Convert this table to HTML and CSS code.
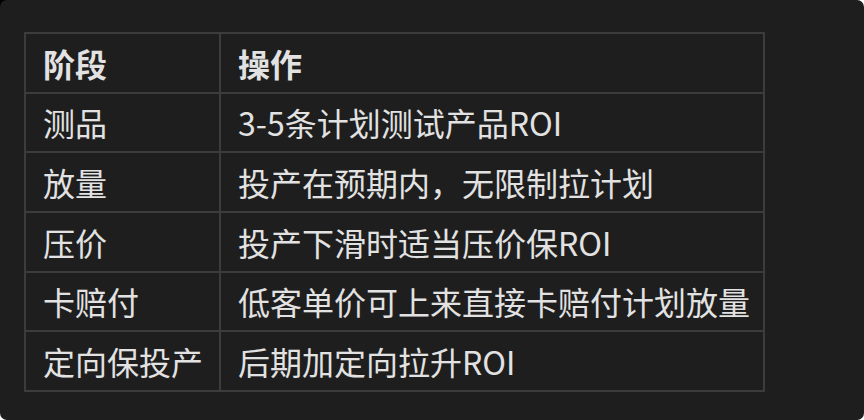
FILE: index.html
```html
<!DOCTYPE html>
<html lang="zh">
<head>
<meta charset="utf-8">
<link rel="stylesheet" href="styles.css">
</head>
<body>
<div class="card">
  <table class="grid">
    <thead>
      <tr><th class="c1">阶段</th><th>操作</th></tr>
    </thead>
    <tbody>
      <tr><td>测品</td><td>3-5条计划测试产品ROI</td></tr>
      <tr><td>放量</td><td>投产在预期内，无限制拉计划</td></tr>
      <tr><td>压价</td><td>投产下滑时适当压价保ROI</td></tr>
      <tr><td>卡赔付</td><td>低客单价可上来直接卡赔付计划放量</td></tr>
      <tr><td>定向保投产</td><td>后期加定向拉升ROI</td></tr>
    </tbody>
  </table>
</div>
</body>
</html>
```
FILE: styles.css
```css
html {
  background: linear-gradient(135deg, #000 0 12px, #fff 12px);
}
body {
  margin: 0;
  width: 864px;
  height: 420px;
}
.card {
  box-sizing: border-box;
  width: 864px;
  height: 420px;
  background: #1e1e1e;
  border-radius: 7px;
  padding: 32px 0 0 24px;
}
.grid {
  border-collapse: collapse;
  width: 741px;
  font-family: "Noto Sans CJK SC", "PingFang SC", sans-serif;
  font-size: 32px;
  color: #e2e2e2;
}
.grid th,
.grid td {
  border: 2px solid #3c3c3c;
  height: 57.7px;
  padding: 0 16px 0 17px;
  text-align: left;
  vertical-align: middle;
  line-height: 1.2;
  white-space: nowrap;
}
.grid th:last-child,
.grid td:last-child {
  padding-right: 13px;
}
.grid th {
  font-weight: 700;
}
.grid .c1 {
  width: 157px;
}
```
